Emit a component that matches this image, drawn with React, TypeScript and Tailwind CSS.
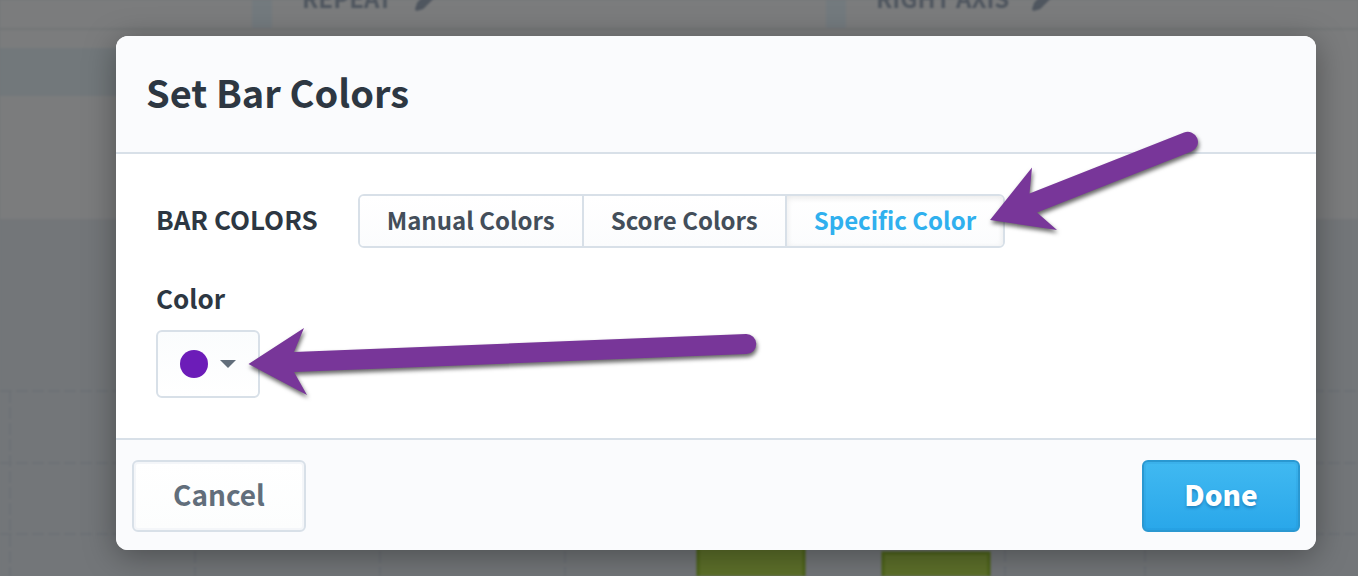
import { useState } from "react";
import { Pencil } from "lucide-react";

const MODES = ["Manual Colors", "Score Colors", "Specific Color"];

const PANELS = [
  { title: "", width: "w-[252px] shrink-0" },
  { title: "Repeat", width: "w-[554px] shrink-0" },
  { title: "Right Axis", width: "flex-1" },
];

function Backdrop() {
  return (
    <div
      aria-hidden="true"
      className="absolute inset-0 flex flex-col bg-[#737679] blur-[1px]"
    >
      <div className="flex h-7 shrink-0 gap-5 bg-[#737a7e]">
        {PANELS.map((p) => (
          <div key={p.title} className={`flex bg-[#7b7c7d] px-[30px] ${p.width}`}>
            {p.title && (
              <div className="-mt-[18px] flex h-8 items-center gap-[22px] text-[24px] leading-8 font-bold text-[#4f565f] uppercase">
                {p.title}
                <Pencil className="size-7 fill-current" />
              </div>
            )}
          </div>
        ))}
      </div>
      <div className="h-5 shrink-0 border-t-2 border-[#737577] bg-[#7b7c7d]" />
      <div className="flex h-12 shrink-0">
        <div className="w-[252px] bg-[#72787b]" />
        <div className="flex-1 bg-[#7b7c7d]" />
      </div>
      <div className="h-[123px] shrink-0 bg-[#7b7c7d]" />
      <svg className="w-full flex-1">
        <g stroke="#6d7175" strokeWidth="2" strokeDasharray="12 4">
          <path d="M0 172H1358M0 244H1358M0 315H1358" />
          <path d="M10 172V357M195 172V357M380 172V357M565 172V357M1005 315V357M1145 315V357" />
        </g>
        <g fill="#5d702a" stroke="#4d6418" strokeWidth="3">
          <rect x="698" y="326" width="106" height="60" />
          <rect x="883" y="334" width="106" height="60" />
        </g>
      </svg>
    </div>
  );
}

function Arrows() {
  return (
    <svg
      aria-hidden="true"
      className="pointer-events-none absolute top-0 left-0 h-[576px] w-[1358px]"
      viewBox="0 0 1358 576"
      fill="#783699"
    >
      <g className="drop-shadow-[1px_3px_2px_rgba(0,0,0,0.6)]">
        <path d="M990 220L1032 167.500L1029.500 193.500L1184 132.500A10 10 0 0 1 1191.500 151.500L1037 212.500L1057 230Z" />
        <path d="M248.500 364L304 328L294 352L746 334A10 10 0 0 1 746.500 354L294 372L307 395Z" />
      </g>
    </svg>
  );
}

function App() {
  const [mode, setMode] = useState("Specific Color");

  return (
    <div className="relative min-h-screen overflow-hidden bg-[#737679] font-['Noto_Sans_CJK_SC',sans-serif]">
      <Backdrop />
      <div
        role="dialog"
        aria-labelledby="dialog-title"
        className="relative mt-9 mr-[42px] mb-6 ml-[116px] overflow-hidden rounded-xl bg-white text-[#2d3742] shadow-[0_6px_32px_rgba(0,0,0,0.35)]"
      >
        <header className="border-b-2 border-[#d8e0e8] bg-[#fafbfd] px-[30px] pt-7 pb-8">
          <h1 id="dialog-title" className="text-[38px] leading-14 font-bold">
            Set Bar Colors
          </h1>
        </header>

        <div className="p-10">
          <div className="flex items-center gap-10">
            <span id="mode-label" className="pb-1 text-[26px] leading-8 font-bold">
              BAR COLORS
            </span>
            <div
              role="group"
              aria-labelledby="mode-label"
              className="flex overflow-hidden rounded-md border-2 border-[#d8e0e8]"
            >
              {MODES.map((m) => (
                <button
                  key={m}
                  type="button"
                  aria-pressed={m === mode}
                  onClick={() => setMode(m)}
                  className={`h-[50px] border-l-2 border-[#d8e0e8] bg-linear-to-b from-white to-[#fbfcfd] px-[27px] pb-[2px] text-[24px] font-bold first:border-l-0 ${
                    m === mode
                      ? "text-[#30b0ee] shadow-[inset_0_2px_6px_rgba(0,0,0,0.09)]"
                      : "text-[#434e5a]"
                  }`}
                >
                  {m}
                </button>
              ))}
            </div>
          </div>

          <div className="mt-[34px] flex flex-col items-start gap-4">
            <label htmlFor="color" className="text-[26px] leading-8 font-bold">
              Color
            </label>
            <button
              id="color"
              type="button"
              className="flex h-[68px] w-[104px] items-center gap-3 rounded-md border-2 border-[#d8e0e8] bg-linear-to-b from-[#fafcfd] to-white pl-[22px]"
            >
              <span className="size-7 rounded-full bg-[#6c1cb8]" />
              <svg className="h-2 w-4" viewBox="0 0 16 8" fill="#626e7b">
                <path d="M0 0H16L8 8Z" />
              </svg>
            </button>
          </div>
        </div>

        <footer className="flex justify-between border-t-2 border-[#d8e0e8] bg-[#fafbfd] px-4 pt-5 pb-[18px]">
          <button
            type="button"
            className="h-[72px] w-[174px] rounded-md border-2 border-[#d8e0e8] bg-linear-to-b from-white to-[#fcfdfd] pb-1 text-[28px] font-bold text-[#626e7b] shadow-[inset_0_0_0_2px_#f4f6f9]"
          >
            Cancel
          </button>
          <button
            type="button"
            className="h-[72px] w-[158px] rounded-md border-2 border-[#2a98d1] bg-linear-to-b from-[#40b9f1] to-[#29a7ea] pb-1 text-[28px] font-black text-white shadow-[inset_0_0_0_2px_rgba(0,80,150,0.07)] text-shadow-[0_2px_3px_rgba(0,70,130,0.4)]"
          >
            Done
          </button>
        </footer>
      </div>
      <Arrows />
    </div>
  );
}

export default App;
